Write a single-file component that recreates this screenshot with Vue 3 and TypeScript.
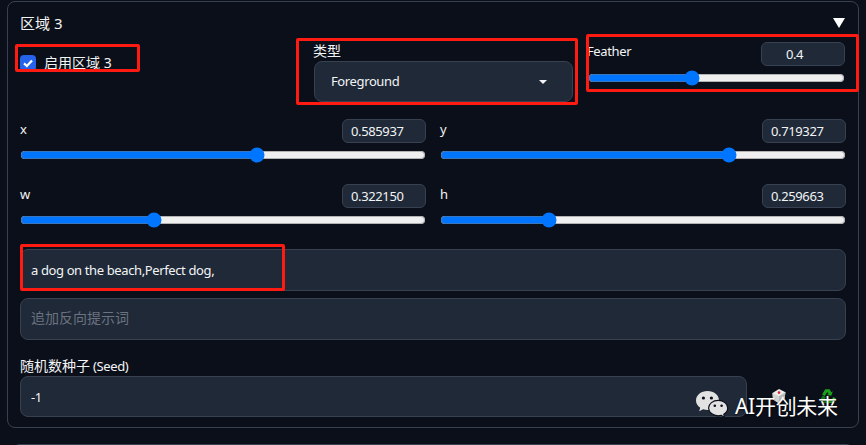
<script setup lang="ts">
type SliderField = {
  label: string;
  value: number;
  text: string;
};

const feather: SliderField = { label: "Feather", value: 0.4, text: "0.4" };

const sliders: SliderField[] = [
  { label: "x", value: 0.585937, text: "0.585937" },
  { label: "y", value: 0.719327, text: "0.719327" },
  { label: "w", value: 0.32215, text: "0.322150" },
  { label: "h", value: 0.259663, text: "0.259663" },
];
</script>

<template>
  <div class="page">
    <section class="panel">
      <header class="panel__head">
        <span>区域 3</span>
        <span class="panel__arrow" aria-hidden="true"></span>
      </header>

      <div class="top-row">
        <label class="check">
          <span class="check__box">
            <svg viewBox="0 0 16 16" width="16" height="16" aria-hidden="true">
              <path d="M4 8.4 6.9 11 12 5.4" fill="none" stroke="#fff" stroke-width="2.2" />
            </svg>
          </span>
          <span class="cjk">启用区域 3</span>
        </label>

        <div>
          <div class="select-label cjk">类型</div>
          <div class="select">
            <span>Foreground</span>
            <span class="select__caret" aria-hidden="true"></span>
          </div>
        </div>

        <div class="slider slider--feather">
          <div class="slider__head">
            <span class="slider__label">{{ feather.label }}</span>
            <div class="num">{{ feather.text }}</div>
          </div>
          <input class="range" type="range" min="0" max="1" step="0.000001" :value="feather.value" />
        </div>
      </div>

      <div class="slider-grid">
        <div v-for="item in sliders" :key="item.label" class="slider">
          <div class="slider__head">
            <span class="slider__label">{{ item.label }}</span>
            <div class="num">{{ item.text }}</div>
          </div>
          <input class="range" type="range" min="0" max="1" step="0.000001" :value="item.value" />
        </div>
      </div>

      <div class="prompts">
        <div class="box">a dog on the beach,Perfect dog,</div>
        <div class="box box--placeholder cjk">追加反向提示词</div>
      </div>

      <div class="seed-label"><span class="cjk">随机数种子</span> (Seed)</div>
      <div class="seed-row">
        <div class="box box--seed">-1</div>
        <div class="seed-icons">
          <svg viewBox="0 0 16 16" width="16" height="16" aria-hidden="true">
            <path d="M8 1 14.5 4.2 13.5 11 7.5 15 2 11.5 1.5 5Z" fill="#ececec" />
            <path d="M1.5 5 8 8.2 7.5 15 2 11.5Z" fill="#d2d2d2" />
            <path d="M8 8.2 14.5 4.2 13.5 11 7.5 15Z" fill="#b9b9b9" />
            <circle cx="8" cy="4.6" r="1.3" fill="#d9252a" />
          </svg>
          <svg viewBox="0 0 16 16" width="16" height="16" aria-hidden="true">
            <path d="M5.2 1.2h4.4l1.8 3 1.5-.9-1.6 4.4-4.4-.7 1.6-1-1.2-2-2.6 4-2.6-1.6Z" fill="#1aa01a" />
            <path d="M1 10.4 2.8 7.4l3 1.8-1.4 2.4h3V15H3.4Z" fill="#0e7d12" />
            <path d="M9 11.6h2.8l1.4-2.6 2.6 1.5L13 15H9v1L6.6 13.4 9 10.6Z" fill="#22ad22" />
          </svg>
        </div>
      </div>
    </section>

    <div class="next-panel"></div>

    <!-- red annotations drawn on top of the screenshot -->
    <span class="mark mark--check"></span>
    <span class="mark mark--select"></span>
    <span class="mark mark--feather"></span>
    <span class="mark mark--prompt"></span>

    <div class="watermark">
      <svg viewBox="0 0 34 31" width="34" height="31" aria-hidden="true">
        <path d="M12.5 1C6 1 1 5.2 1 10.4c0 3 1.6 5.5 4.2 7.3l-1 3.5 3.9-2c1.3.4 2.8.7 4.4.7 6.5 0 11.5-4.2 11.5-9.5S19 1 12.5 1Z" fill="#e2e2e2" />
        <circle cx="8.4" cy="8" r="1.6" fill="#0b0f19" />
        <circle cx="16.4" cy="8" r="1.6" fill="#0b0f19" />
        <path d="M23.2 10.4c-5.3 0-9.6 3.4-9.6 7.7s4.3 7.7 9.6 7.7c1.1 0 2.2-.2 3.2-.5l3.2 2.4-.8-3.4c2.4-1.4 3.9-3.7 3.9-6.2 0-4.3-4.2-7.7-9.5-7.7Z" fill="#e2e2e2" stroke="#0b0f19" stroke-width="1.2" />
        <circle cx="19.8" cy="15.8" r="1.3" fill="#0b0f19" />
        <circle cx="26.6" cy="15.8" r="1.3" fill="#0b0f19" />
      </svg>
      <span class="watermark__text">AI开创未来</span>
    </div>
  </div>
</template>

<style scoped>
.page {
  position: relative;
  width: 866px;
  height: 445px;
  overflow: hidden;
  padding: 1px 7px 0;
  box-sizing: border-box;
  background: #0b0f19;
  color: #f3f4f6;
  font-family: "Noto Sans", "Noto Sans CJK SC", sans-serif;
  font-size: 13px;
  letter-spacing: -0.38px;
  line-height: 17px;
}

.cjk {
  font-size: 14px;
  letter-spacing: 0;
}

.panel {
  height: 427px;
  box-sizing: border-box;
  padding: 10px 12px 0;
  border: 1px solid #374151;
  border-radius: 8px;
}

.panel__head {
  display: flex;
  align-items: center;
  justify-content: space-between;
  height: 22px;
  padding-right: 1px;
  font-size: 15px;
  letter-spacing: 0;
}

.panel__arrow {
  width: 0;
  height: 0;
  border-left: 6px solid transparent;
  border-right: 6px solid transparent;
  border-top: 10px solid #fff;
}

.top-row {
  display: grid;
  grid-template-columns: 280px 259px 259px;
  gap: 14px;
  margin-top: 8px;
}

.check {
  display: flex;
  align-items: center;
  gap: 8px;
  height: 16px;
  margin-top: 13px;
  line-height: 14px;
}

.check__box {
  display: block;
  width: 16px;
  height: 16px;
  border-radius: 4px;
  background: #2563eb;
}

.select-label {
  margin: 0 0 2px -1px;
}

.select {
  display: flex;
  align-items: center;
  justify-content: space-between;
  height: 41px;
  box-sizing: border-box;
  padding: 0 25px 0 16px;
  border: 1px solid #374151;
  border-radius: 8px;
  background: #1f2937;
}

.select__caret {
  width: 0;
  height: 0;
  border-left: 4px solid transparent;
  border-right: 4px solid transparent;
  border-top: 4px solid #f3f4f6;
}

.slider-grid {
  display: grid;
  grid-template-columns: 406px 406px;
  gap: 21px 14px;
  margin-top: 17px;
}

.slider__head {
  display: flex;
  align-items: center;
  justify-content: space-between;
  height: 24px;
}

.slider__label {
  margin-bottom: 4px;
}

.slider--feather .slider__head {
  padding-right: 1px;
}

.slider--feather .slider__label {
  margin-bottom: 5px;
}

.num {
  width: 84px;
  height: 24px;
  box-sizing: border-box;
  padding: 0 25px 0 8px;
  border: 1px solid #374151;
  border-radius: 6px;
  background: #1f2937;
  line-height: 23px;
  text-align: center;
}

.range {
  display: block;
  width: 100%;
  margin: 4px 0 0;
}

.slider--feather .range {
  width: calc(100% - 2px);
  margin: 4px 1px 0;
}

.prompts {
  display: grid;
  gap: 7px;
  margin-top: 21px;
}

.box {
  height: 42px;
  box-sizing: border-box;
  padding: 0 10px;
  border: 1px solid #374151;
  border-radius: 8px;
  background: #1f2937;
  line-height: 40px;
}

.box--placeholder {
  color: #6b7280;
  line-height: 38px;
}

.box--seed {
  width: 727px;
  height: 41px;
  flex: none;
}

.seed-label {
  height: 17px;
  margin-top: 17px;
  margin-bottom: 2px;
}

.seed-row {
  display: flex;
}

.seed-icons {
  display: flex;
  gap: 33px;
  margin: 12px 0 0 24px;
}

.next-panel {
  position: absolute;
  left: 12px;
  right: 12px;
  top: 444px;
  height: 8px;
  border-top: 1px solid #374151;
  border-radius: 8px 8px 0 0;
}

.mark {
  position: absolute;
  box-sizing: border-box;
  border: 3px solid #ff1a12;
  border-radius: 2px;
}

.mark--check {
  left: 15px;
  top: 44px;
  width: 125px;
  height: 28px;
}

.mark--select {
  left: 296px;
  top: 38px;
  width: 282px;
  height: 67px;
}

.mark--feather {
  left: 586px;
  top: 34px;
  width: 273px;
  height: 58px;
}

.mark--prompt {
  left: 20px;
  top: 244px;
  width: 265px;
  height: 47px;
}

.watermark {
  position: absolute;
  left: 695px;
  top: 390px;
  display: flex;
  align-items: flex-start;
  gap: 6px;
  color: #fff;
  font-size: 21px;
  letter-spacing: -0.3px;
  line-height: 30px;
  text-shadow: 0 1px 2px rgba(0, 0, 0, 0.6);
}

.watermark__text {
  margin-top: 1px;
}
</style>

<style>
html,
body {
  margin: 0;
  background: #0b0f19;
}
</style>
